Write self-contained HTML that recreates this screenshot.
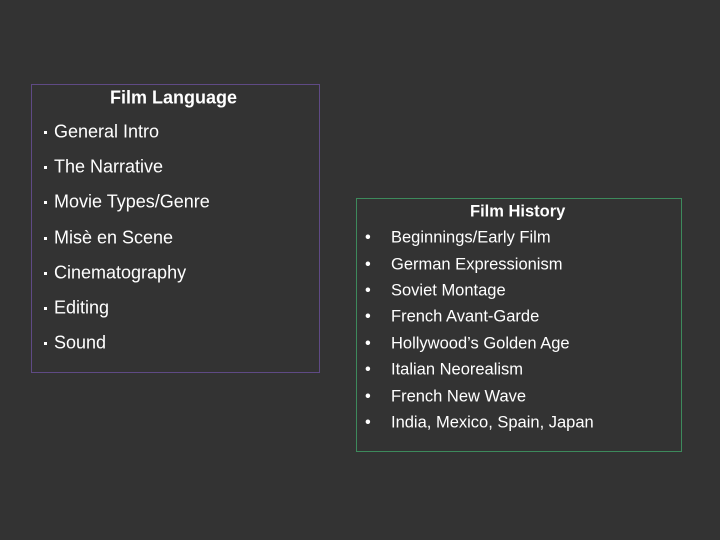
<!DOCTYPE html>
<html><head><meta charset="utf-8"><style>
body{margin:0;width:720px;height:540px;background:#333333;position:relative;overflow:hidden;font-family:"Liberation Sans",sans-serif;color:#fff}
.box1{position:absolute;left:31px;top:84px;width:287px;height:287px;border:1px solid #5f4a85}
.box2{position:absolute;left:356px;top:198px;width:324px;height:252px;border:1px solid #3d8a5c}
.t{position:absolute;white-space:nowrap;transform:translateY(-50%)}
.l{font-size:18px}
.r{font-size:16.5px}
.d{position:absolute;left:44px;width:3px;height:3px;background:#fff;margin-top:-1px}
</style></head><body>
<div class="box1"></div><div class="box2"></div>
<div class="t l" style="left:110px;top:98px;font-weight:bold">Film Language</div>
<div class="d" style="top:132px"></div><div class="t l" style="left:54px;top:132px">General Intro</div>
<div class="d" style="top:167px"></div><div class="t l" style="left:54px;top:167px">The Narrative</div>
<div class="d" style="top:202px"></div><div class="t l" style="left:54px;top:202px">Movie Types/Genre</div>
<div class="d" style="top:238px"></div><div class="t l" style="left:54px;top:238px">Misè en Scene</div>
<div class="d" style="top:273px"></div><div class="t l" style="left:54px;top:273px">Cinematography</div>
<div class="d" style="top:308px"></div><div class="t l" style="left:54px;top:308px">Editing</div>
<div class="d" style="top:343px"></div><div class="t l" style="left:54px;top:343px">Sound</div>
<div class="t r" style="left:470px;top:212px;font-weight:bold">Film History</div>
<div class="t r" style="left:365px;top:238px">•</div><div class="t r" style="left:391px;top:238px">Beginnings/Early Film</div>
<div class="t r" style="left:365px;top:265px">•</div><div class="t r" style="left:391px;top:265px">German Expressionism</div>
<div class="t r" style="left:365px;top:291px">•</div><div class="t r" style="left:391px;top:291px">Soviet Montage</div>
<div class="t r" style="left:365px;top:317px">•</div><div class="t r" style="left:391px;top:317px">French Avant-Garde</div>
<div class="t r" style="left:365px;top:344px">•</div><div class="t r" style="left:391px;top:344px">Hollywood’s Golden Age</div>
<div class="t r" style="left:365px;top:370px">•</div><div class="t r" style="left:391px;top:370px">Italian Neorealism</div>
<div class="t r" style="left:365px;top:397px">•</div><div class="t r" style="left:391px;top:397px">French New Wave</div>
<div class="t r" style="left:365px;top:423px">•</div><div class="t r" style="left:391px;top:423px">India, Mexico, Spain, Japan</div>
</body></html>
